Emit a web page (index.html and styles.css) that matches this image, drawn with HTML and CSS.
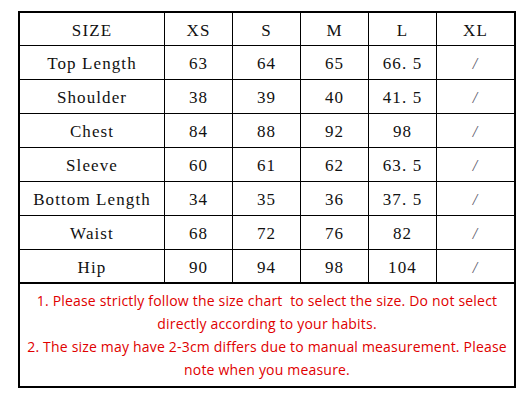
FILE: index.html
```html
<!DOCTYPE html>
<html>
<head>
<meta charset="utf-8">
<link rel="stylesheet" href="styles.css">
</head>
<body>
<div class="chart">
  <div class="grid">
    <div class="cell head">SIZE</div><div class="cell head">XS</div><div class="cell head">S</div><div class="cell head">M</div><div class="cell head">L</div><div class="cell head">XL</div>
    <div class="cell">Top Length</div><div class="cell">63</div><div class="cell">64</div><div class="cell">65</div><div class="cell">66. 5</div><div class="cell slash">/</div>
    <div class="cell">Shoulder</div><div class="cell">38</div><div class="cell">39</div><div class="cell">40</div><div class="cell">41. 5</div><div class="cell slash">/</div>
    <div class="cell">Chest</div><div class="cell">84</div><div class="cell">88</div><div class="cell">92</div><div class="cell">98</div><div class="cell slash">/</div>
    <div class="cell">Sleeve</div><div class="cell">60</div><div class="cell">61</div><div class="cell">62</div><div class="cell">63. 5</div><div class="cell slash">/</div>
    <div class="cell">Bottom Length</div><div class="cell">34</div><div class="cell">35</div><div class="cell">36</div><div class="cell">37. 5</div><div class="cell slash">/</div>
    <div class="cell">Waist</div><div class="cell">68</div><div class="cell">72</div><div class="cell">76</div><div class="cell">82</div><div class="cell slash">/</div>
    <div class="cell">Hip</div><div class="cell">90</div><div class="cell">94</div><div class="cell">98</div><div class="cell">104</div><div class="cell slash">/</div>
  </div>
  <div class="notes">
    <p class="note">1. Please strictly follow the size chart&nbsp; to select the size. Do not select<br>directly according to your habits.</p>
    <p class="note">2. The size may have 2-3cm differs due to manual measurement. Please<br>note when you measure.</p>
  </div>
</div>
</body>
</html>
```
FILE: styles.css
```css
html, body {
  margin: 0;
  padding: 0;
  background: #fff;
}
.chart {
  margin: 11px 0 0 18px;
  width: 494px;
  border: 2px solid #000;
}
.grid {
  display: grid;
  grid-template-columns: 144px 67px 67px 67px 67px 77px;
  grid-template-rows: 32px repeat(6, 33px) 32px;
  gap: 1px;
  background: #000;
}
.cell {
  background: #fff;
  display: flex;
  align-items: center;
  justify-content: center;
  padding-top: 3px;
  box-sizing: border-box;
  font-family: "Liberation Serif", serif;
  font-size: 17px;
  letter-spacing: 1.1px;
  color: #111;
  white-space: pre;
}
.slash {
  color: #556;
  font-size: 16px;
  font-style: italic;
}
.notes {
  border-top: 2px solid #000;
  height: 104px;
  box-sizing: border-box;
  padding-top: 5px;
  text-align: center;
  font-family: "Open Sans", sans-serif;
  font-size: 14px;
  letter-spacing: 0.19px;
  line-height: 23px;
  color: #e00000;
}
.note {
  margin: 0;
}
```
